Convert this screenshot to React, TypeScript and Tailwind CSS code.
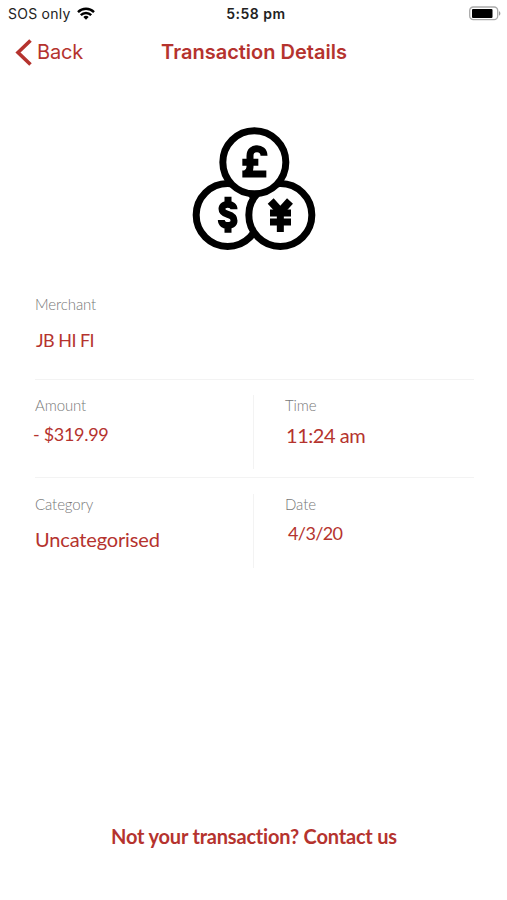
import type { ReactNode } from 'react'

function StatusBar() {
  return (
    <div className="grid grid-cols-3 items-center h-[27px] pl-2 pr-[6px] font-['Inter',sans-serif] text-[#222]">
      <div className="flex items-center gap-[6px]">
        <span className="text-[14px] leading-none tracking-[0.25px] whitespace-nowrap">SOS only</span>
        <svg width="18" height="13" viewBox="0 0 18 13" fill="none" stroke="#000" strokeWidth="2.4">
          <path d="M1 5.1a11.3 11.3 0 0 1 16 0" />
          <path d="M3.8 8.2a7.3 7.3 0 0 1 10.4 0" />
          <path d="M9 12.8 6.3 10.1a3.8 3.8 0 0 1 5.4 0z" fill="#000" stroke="none" />
        </svg>
      </div>
      <span className="text-center text-[14px] leading-none font-semibold tracking-[0.5px] pl-[3px]">5:58 pm</span>
      <svg className="justify-self-end" width="33" height="15" viewBox="0 0 33 15">
        <rect x="1.7" y="1" width="28" height="12.6" rx="3.6" fill="#fff" stroke="#aaa" strokeWidth="1.3" />
        <rect x="4" y="3" width="20.5" height="9" rx="1" fill="#000" />
        <path d="M31 5.3c1.8.6 1.8 3.8 0 4.4z" fill="#999" />
      </svg>
    </div>
  )
}

function CurrencyIcon() {
  return (
    <svg className="mx-auto" width="140" height="140" viewBox="0 0 420 420" fill="none" stroke="#000" strokeWidth="21">
      <circle cx="131" cy="285" r="94.5" fill="#fff" />
      <circle cx="289" cy="285" r="94.5" fill="#fff" />
      <circle cx="211" cy="127" r="94.5" fill="#fff" />
      {/* Pound */}
      <path d="M240 107c0-28-42-28-42 0v34c0 12-7 18-15 21M175 127h48M175 162h72" />
      {/* Dollar */}
      <path d="M150 268c0-20-36-20-36-2 0 24 36 10 36 36 0 20-38 20-38-2M132 230v24M132 314v24" />
      {/* Yen */}
      <path d="M260 243l29 32 29-32" strokeWidth="24" />
      <path d="M289 268v68M258 279h63M258 306h63" />
    </svg>
  )
}

function Field({ label, className = '', children }: { label: string; className?: string; children: ReactNode }) {
  return (
    <div className={`flex flex-col items-start ${className}`}>
      <span className="text-[15px] leading-5 font-light tracking-[-0.1px] text-[#777]">{label}</span>
      {children}
    </div>
  )
}

export default function App() {
  return (
    <div className="flex flex-col w-full h-[900px] bg-white text-[#b5332e] font-['Lato',sans-serif] overflow-hidden [font-variant-ligatures:none]">
      <StatusBar />

      <header className="grid grid-cols-[1fr_auto_1fr] items-center h-[50px] pl-[15px] pr-[14px] font-['Inter',sans-serif]">
        <button className="flex items-center gap-[5px] text-[20px] tracking-[-0.2px]">
          <svg width="17" height="27" viewBox="0 0 17 27" fill="none" stroke="currentColor" strokeWidth="3.6">
            <path d="M15.5 1.5 3 13.5l12.5 12" />
          </svg>
          Back
        </button>
        <h1 className="text-[20px] font-semibold">Transaction Details</h1>
      </header>

      <div className="pt-[43px]">
        <CurrencyIcon />
      </div>

      <main className="flex flex-col pl-[35px] pr-[33px] pt-[34px]">
        <Field label="Merchant" className="h-[86px] border-b border-[#f3f3f3]">
          <span className="mt-[14px] ml-px text-[18px] leading-6 tracking-[-0.55px]">JB HI FI</span>
        </Field>

        <div className="grid grid-cols-[218px_1fr] h-[98px] pt-[15px] border-b border-[#f3f3f3]">
          <Field label="Amount">
            <span className="mt-[7px] -ml-0.5 text-[18px] leading-6 tracking-[-0.3px]">- $319.99</span>
          </Field>
          <Field label="Time" className="h-[74px] pl-[31px] border-l border-[#f3f3f3]">
            <span className="mt-2 ml-px text-[20px] leading-6 tracking-[-0.45px]">11:24 am</span>
          </Field>
        </div>

        <div className="grid grid-cols-[218px_1fr] h-[98px] pt-4">
          <Field label="Category">
            <span className="mt-[13px] text-[20px] leading-6 tracking-[-0.15px]">Uncategorised</span>
          </Field>
          <Field label="Date" className="h-[74px] pl-[31px] border-l border-[#f3f3f3]">
            <span className="mt-[7px] ml-[3px] text-[18px] leading-6 tracking-[-0.6px]">4/3/20</span>
          </Field>
        </div>
      </main>

      <a href="#" className="mt-auto mb-[52px] pl-px text-center text-[20px] leading-6 font-bold tracking-[-0.19px]">
        Not your transaction? Contact us
      </a>
    </div>
  )
}
